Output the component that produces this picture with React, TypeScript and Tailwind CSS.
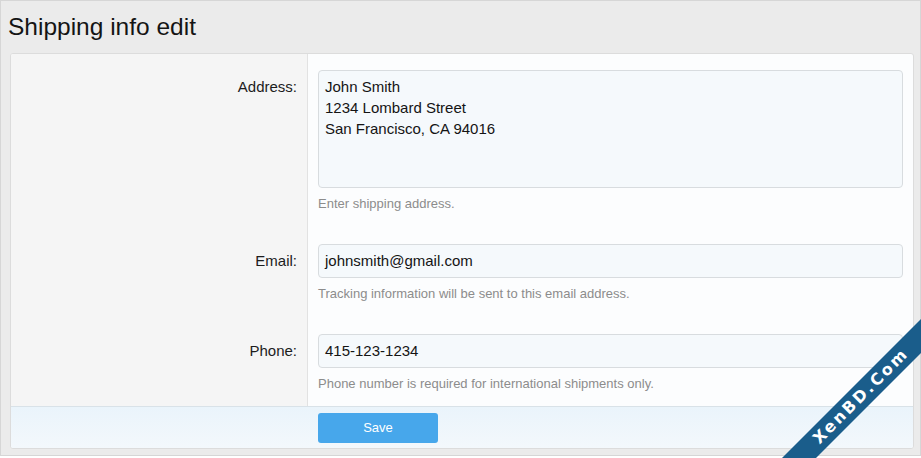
const font = { fontFamily: '"Liberation Sans", Arial, sans-serif' }

interface FieldProps {
  label: string
  hint: string
  children: React.ReactNode
  last?: boolean
}

function Field({ label, hint, children, last }: FieldProps) {
  return (
    <div className="flex">
      <div className="w-[297px] shrink-0 bg-[#f5f5f5] border-r border-[#e2e2e2] pt-4 pr-[10px] text-right">
        <div className={`text-[15px] text-[#1c1c1c] ${label === 'Address:' ? 'leading-[21px] pt-[6px]' : 'leading-[34px]'}`}>{label}</div>
      </div>
      <div className={`flex-1 pl-[10px] pr-[10px] pt-4 ${last ? 'pb-[14px]' : 'pb-4'}`}>
        {children}
        <div className="mt-2 text-[13px] leading-4 text-[#8c8c8c]">{hint}</div>
      </div>
    </div>
  )
}

export default function App() {
  return (
    <div className="relative w-[921px] h-[458px] overflow-hidden bg-white" style={font}>
      <div className="h-[456px] bg-[#ebebeb] border border-[#d6d6d6] flex flex-col">
        <div className="h-[52px] flex items-center pl-[7px] text-[24.5px] text-[#141414]">Shipping info edit</div>
        <div className="ml-[9px] mr-[6px] rounded-[3px] border border-[#dcdcdc] bg-[#fcfdfe] overflow-hidden">
          <Field label="Address:" hint="Enter shipping address.">
            <div className="h-[118px] rounded-[4px] border border-[#d8dcdf] bg-[#f5f9fc] px-[6px] pt-[5px] text-[15px] leading-[21px] text-[#141414]">
              <div>John Smith</div>
              <div>1234 Lombard Street</div>
              <div>San Francisco, CA 94016</div>
            </div>
          </Field>
          <Field label="Email:" hint="Tracking information will be sent to this email address.">
            <div className="h-[34px] rounded-[4px] border border-[#d8dcdf] bg-[#f5f9fc] px-[6px] flex items-center text-[15px] text-[#141414]">
              johnsmith@gmail.com
            </div>
          </Field>
          <Field label="Phone:" hint="Phone number is required for international shipments only." last>
            <div className="h-[34px] rounded-[4px] border border-[#d8dcdf] bg-[#f5f9fc] px-[6px] flex items-center text-[15px] text-[#141414]">
              415-123-1234
            </div>
          </Field>
          <div className="h-[42px] border-t border-[#d9e2e8] bg-gradient-to-b from-[#eaf4fb] to-[#f3f8fc] pl-[307px] pt-[6px]">
            <button className="w-[120px] h-[30px] rounded-[3px] bg-[#47a7eb] text-white text-[13px]">Save</button>
          </div>
        </div>
      </div>

      {/* watermark ribbon */}
      <div
        className="absolute left-[731px] top-[384px] w-[260px] h-[24px] -rotate-45 bg-[#1a5d8b] flex items-center justify-center text-white font-bold text-[16px] tracking-[2.5px]"
        style={{ fontFamily: '"DejaVu Sans", Verdana, sans-serif' }}
      >
        XenBD.Com
      </div>
    </div>
  )
}
